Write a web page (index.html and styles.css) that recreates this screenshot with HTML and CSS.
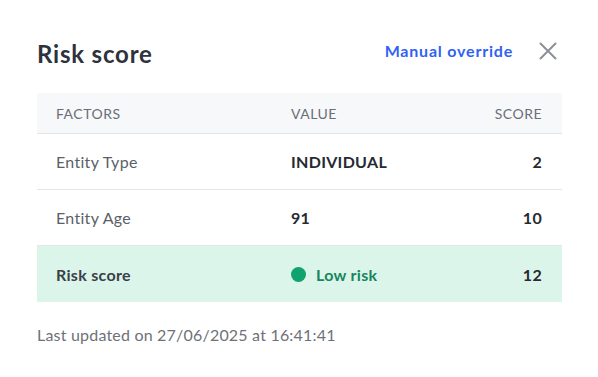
FILE: index.html
```html
<!DOCTYPE html>
<html lang="en">
<head>
    <meta charset="UTF-8">
    <meta name="viewport" content="width=device-width, initial-scale=1.0">
    <title>Risk score</title>
    <link rel="stylesheet" href="styles.css">
</head>
<body>
    <div class="panel">
        <div class="panel-header">
            <h2>Risk score</h2>
            <div class="header-actions">
                <a class="override-link" href="#">Manual override</a>
                <button class="close-btn" aria-label="Close">
                    <svg width="18" height="18" viewBox="0 0 18 18">
                        <path d="M1.5 1.5 L16.5 16.5 M16.5 1.5 L1.5 16.5" stroke="#8c9097" stroke-width="2" stroke-linecap="round"/>
                    </svg>
                </button>
            </div>
        </div>

        <div class="risk-table">
            <div class="row head">
                <div>Factors</div>
                <div>Value</div>
                <div class="score">Score</div>
            </div>
            <div class="row">
                <div class="factor">Entity Type</div>
                <div class="value">INDIVIDUAL</div>
                <div class="score">2</div>
            </div>
            <div class="row">
                <div class="factor">Entity Age</div>
                <div class="value">91</div>
                <div class="score">10</div>
            </div>
            <div class="row total">
                <div class="factor">Risk score</div>
                <div class="value level"><span class="dot"></span>Low risk</div>
                <div class="score">12</div>
            </div>
        </div>

        <p class="updated">Last updated on 27/06/2025 at 16:41:41</p>
    </div>
</body>
</html>
```

FILE: styles.css
```css
* {
    margin: 0;
    padding: 0;
    box-sizing: border-box;
}

body {
    font-family: Lato, 'Open Sans', sans-serif;
    background: white;
    color: #2b303a;
    letter-spacing: 0.3px;
}

.panel {
    padding: 37px 36px 0 37px;
}

.panel-header {
    display: flex;
    align-items: center;
    justify-content: space-between;
    height: 32px;
}

.panel-header h2 {
    font-size: 24px;
    font-weight: 700;
    color: #2d323c;
    letter-spacing: 0.8px;
}

.header-actions {
    display: flex;
    align-items: center;
    gap: 26px;
    margin-top: -5px;
}

.override-link {
    color: #2f62f3;
    font-size: 16px;
    font-weight: 700;
    letter-spacing: 0.8px;
    text-decoration: none;
}

.close-btn {
    background: none;
    border: none;
    display: flex;
    cursor: pointer;
    margin-right: 5px;
}

.risk-table {
    margin-top: 24px;
}

.row {
    display: grid;
    grid-template-columns: 235px 1fr 80px;
    align-items: center;
    height: 56px;
    padding: 0 20px 0 19px;
    border-bottom: 1px solid #e3e5e8;
    font-size: 16px;
}

.row.head {
    height: 41px;
    background: #f7f8fa;
    font-size: 14px;
    letter-spacing: 0.5px;
    text-transform: uppercase;
    color: #6a6e76;
}

.row.total {
    background: #dcf5eb;
    border-bottom: none;
}

.factor {
    color: #5a5f69;
}

.total .factor {
    color: #3a3f48;
    font-weight: 700;
}

.value {
    color: #262a31;
    font-weight: 700;
}

.score {
    text-align: right;
    color: #262a31;
    font-weight: 700;
}

.row.head .score {
    font-weight: 400;
    color: #6a6e76;
}

.level {
    display: flex;
    align-items: center;
    gap: 10px;
    color: #17865c;
}

.dot {
    width: 15px;
    height: 15px;
    border-radius: 50%;
    background: #10a36e;
}

.updated {
    margin-top: 23px;
    font-size: 16px;
    letter-spacing: 0.2px;
    color: #6e7178;
}
```
